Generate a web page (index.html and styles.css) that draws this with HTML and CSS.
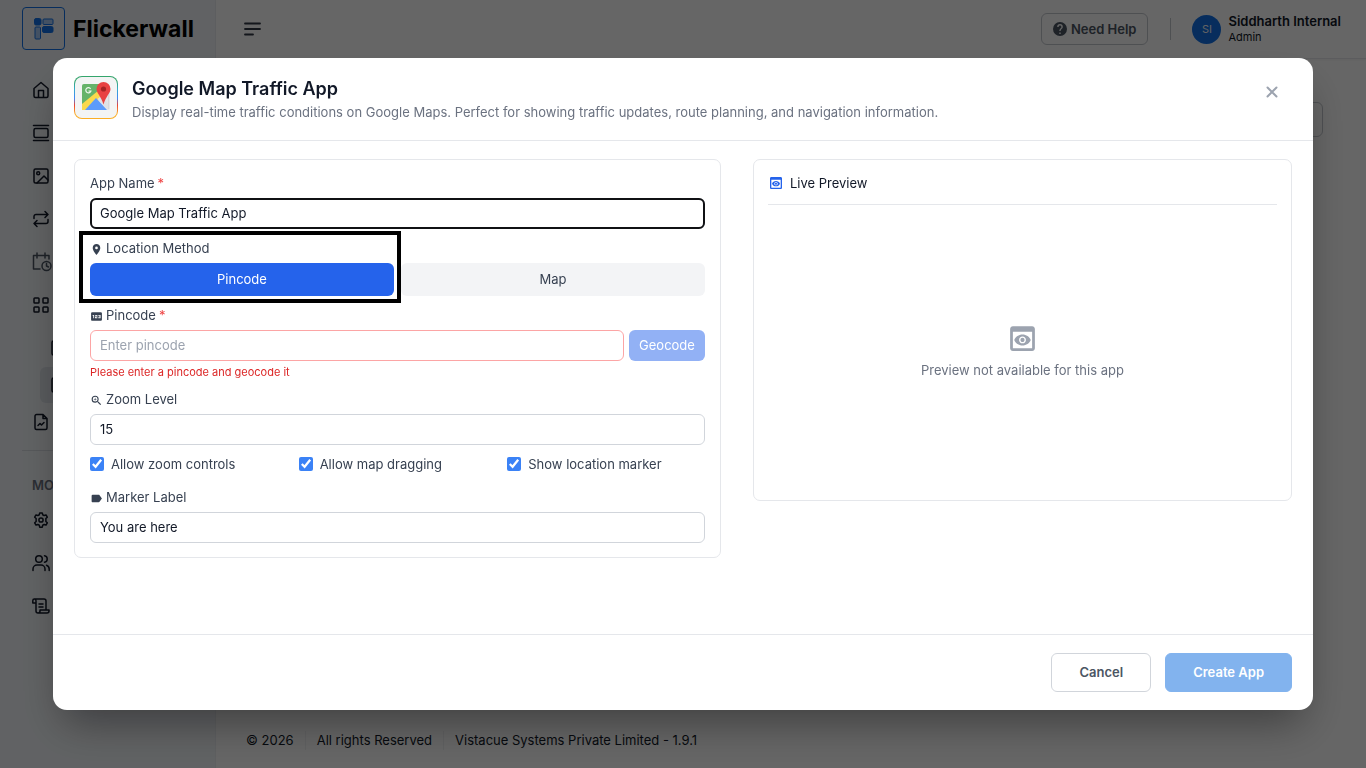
FILE: index.html
```html
<!DOCTYPE html>
<html lang="en">
<head>
<meta charset="utf-8">
<title>Flickerwall</title>
<meta name="viewport" content="width=device-width, initial-scale=1">
<link rel="stylesheet" href="styles.css">
</head>
<body>
<div class="app">
  <aside class="sidebar">
    <div class="brand">
      <span class="brand-mark">
        <svg width="20" height="22" viewBox="0 0 20 22" fill="none" stroke="#1272e8"><rect x=".5" y=".5" width="6.500" height="6.500" rx="1.500" fill="#1272e8"/><rect x="9" y="1" width="10" height="5.500" rx="1" fill="#a9cbf7"/><rect x="8.500" y="8.500" width="10.500" height="6" rx="1.500" fill="#1272e8"/><rect x="1" y="9" width="5.500" height="12" rx="1" fill="#a9cbf7"/></svg>
      </span>
      <span class="brand-name">Flickerwall</span>
    </div>
    <nav class="nav" aria-label="Main">
      <a class="nav-item" href="#" aria-label="Home"><svg class="line-icon" viewBox="0 0 18 18"><path d="M2 7.500 9 1.500l7 6V15a1.500 1.500 0 0 1-1.500 1.500h-11A1.500 1.500 0 0 1 2 15zM6.500 16V9.500h5V16"/></svg></a>
      <a class="nav-item" href="#" aria-label="Screens"><svg class="line-icon" viewBox="0 0 18 18"><path d="M1.500 1.500h15M1.500 16.500h15"/><rect x="2" y="4.500" width="14" height="9" rx="1.500"/></svg></a>
      <a class="nav-item" href="#" aria-label="Media"><svg class="line-icon" viewBox="0 0 18 18"><rect x="2" y="2" width="14" height="14" rx="1.500"/><circle cx="6.200" cy="6.200" r="1.500"/><path d="m5 16 7-7 4 4"/></svg></a>
      <a class="nav-item" href="#" aria-label="Playlists"><svg class="line-icon" viewBox="0 0 18 18"><path d="m13 1.500 3 3-3 3M2 8.500V6.500a2 2 0 0 1 2-2h12M5 16.500l-3-3 3-3M16 9.500v2a2 2 0 0 1-2 2H2"/></svg></a>
      <a class="nav-item nav-muted" href="#" aria-label="Schedules"><svg class="line-icon line-icon-lg" viewBox="0 0 20 20"><path d="M17 7V3.500H1.500V17H8M5 1v5M13 1v5"/><circle cx="14.500" cy="14" r="4.500"/><path d="M14.500 11.500V14l2 1"/></svg></a>
      <a class="nav-item" href="#" aria-label="Apps"><svg class="line-icon" viewBox="0 0 18 18"><rect x="2" y="2" width="5" height="5" rx=".8"/><rect x="11" y="2" width="5" height="5" rx=".8"/><rect x="2" y="11" width="5" height="5" rx=".8"/><rect x="11" y="11" width="5" height="5" rx=".8"/></svg></a>
      <div class="subnav">
        <a class="nav-item" href="#" aria-label="App store"><svg class="line-icon" viewBox="0 0 18 18"><rect x="2" y="2" width="14" height="14" rx="1.500"/></svg></a>
        <a class="nav-item nav-active" href="#" aria-label="My apps"><svg class="line-icon" viewBox="0 0 18 18"><rect x="2" y="2" width="14" height="14" rx="1.500"/></svg></a>
        <a class="nav-item nav-flush" href="#" aria-label="Reports"><svg class="line-icon" viewBox="0 0 18 18"><path d="M11 1.500H4.500A1.500 1.500 0 0 0 3 3v12a1.500 1.500 0 0 0 1.500 1.500h9A1.500 1.500 0 0 0 15 15V5.500zM11 1.500v4h4M6 12.500l2-2 1.500 1.500 2.500-2.500"/></svg></a>
      </div>
      <h2 class="nav-heading">MORE</h2>
      <a class="nav-item" href="#" aria-label="Settings"><svg class="line-icon" viewBox="0 0 24 24"><path class="gear" d="M10.300 2.500h3.400l.6 2.500 1.900 1.100 2.500-.8 1.700 3-1.900 1.800v3.800l1.900 1.800-1.700 3-2.500-.8-1.900 1.100-.6 2.500h-3.400l-.6-2.500-1.900-1.100-2.500.8-1.700-3 1.900-1.800v-3.800L3.600 8.300l1.700-3 2.500.8L9.700 5z"/><circle class="gear" cx="12" cy="12" r="2.800"/></svg></a>
      <a class="nav-item" href="#" aria-label="Users"><svg class="line-icon" viewBox="0 0 18 18"><circle cx="7" cy="5" r="3.300"/><path d="M1 16.500v-1.500a4 4 0 0 1 4-4h4a4 4 0 0 1 4 4v1.500M12.500 1.700a3.300 3.300 0 0 1 0 6.500M14.500 11.200a4 4 0 0 1 2.700 3.800v1.500"/></svg></a>
      <a class="nav-item" href="#" aria-label="Logs"><svg class="line-icon" viewBox="0 0 18 18"><path d="M14 12V4a2 2 0 0 0-2-2H3M7 7h4M7 10h4M6 16h9a2 2 0 0 0 2-2v-1H8v1a2 2 0 0 1-4 0V3.700a1.600 1.600 0 0 0-3.200 0V6H4"/></svg></a>
    </nav>
  </aside>
  <div class="main">
    <header class="topbar">
      <button class="menu-button" type="button" aria-label="Toggle menu"><svg width="18" height="14" viewBox="0 0 18 14" stroke="#303744" stroke-width="1.800" stroke-linecap="round"><path d="M1 1.500h15M1 7h15M1 12.500h8"/></svg></button>
      <button class="help-button" type="button"><svg width="14" height="14" viewBox="2 2 20 20" fill="#4b5563"><path d="M12 2a10 10 0 1 0 0 20 10 10 0 0 0 0-20zm1 17h-2v-2h2zm2.070-7.750-.9.920C13.450 12.900 13 13.500 13 15h-2v-.5c0-1.100.45-2.100 1.170-2.830l1.240-1.260c.37-.36.59-.86.59-1.410a2 2 0 0 0-4 0H8a4 4 0 0 1 8 0c0 .88-.36 1.680-.93 2.250z"/></svg>Need Help</button>
      <span class="topbar-rule"></span>
      <div class="user">
        <span class="avatar">SI</span>
        <div class="user-text"><strong>Siddharth Internal</strong><span>Admin</span></div>
      </div>
    </header>
    <main class="page"><button class="page-button" type="button" aria-label="Page actions"></button></main>
    <footer class="page-footer"><span>© 2026</span><span>All rights Reserved</span><span>Vistacue Systems Private Limited - 1.9.1</span></footer>
  </div>
</div>

<div class="overlay">
  <section class="modal" role="dialog" aria-modal="true" aria-labelledby="dialog-title">
    <header class="modal-header">
      <span class="app-icon">
        <svg width="30" height="30" viewBox="0 0 30 30"><path d="M26 6h2.500v21.500H22z" fill="#d5d8da"/><rect x="1" y="2" width="26" height="26" rx="2" fill="#e4e6e8"/><path d="M3 2h17l1 8L1 27V4a2 2 0 0 1 2-2z" fill="#66b36a"/><path d="M1 22 18 8l5 6L5 28H1z" fill="#fbd94d"/><path d="m15 16 11 12H4z" fill="#5c9bfb"/><path d="m16.500 17 5-4 5.500 9v6z" fill="#dfe2e5"/><path d="M9.600 6.800A2.600 2.600 0 1 0 9.900 9H7.500" fill="none" stroke="#eef7ee" stroke-width="1.200"/><path d="M22.500 0a7 7 0 0 0-7 7c0 4 4.500 7 7 15.500C25 14 29.500 11 29.500 7a7 7 0 0 0-7-7z" fill="#e84242"/><circle cx="22.500" cy="7" r="2.600" fill="#a52525"/></svg>
      </span>
      <div class="modal-heading">
        <h1 id="dialog-title">Google Map Traffic App</h1>
        <p>Display real-time traffic conditions on Google Maps. Perfect for showing traffic updates, route planning, and navigation information.</p>
      </div>
      <button class="close-button" type="button" aria-label="Close"><svg width="12" height="12" viewBox="0 0 12 12" stroke="#9ca3af" stroke-width="2" stroke-linecap="round"><path d="m1.500 1.500 9 9M10.500 1.500l-9 9"/></svg></button>
    </header>
    <div class="modal-body">
      <form class="card settings" id="app-form">
        <div class="field">
          <label for="app-name">App Name <span class="required">*</span></label>
          <input class="text-input name-input" id="app-name" type="text" value="Google Map Traffic App" autofocus>
        </div>
        <div class="field highlighted" role="group" aria-labelledby="method-label">
          <span class="label" id="method-label"><svg class="label-icon" viewBox="0 0 24 24"><path d="M12 2C8.130 2 5 5.130 5 9c0 5.250 7 13 7 13s7-7.750 7-13c0-3.870-3.130-7-7-7zm0 9.500a2.500 2.500 0 0 1 0-5 2.500 2.500 0 0 1 0 5z"/></svg>Location Method</span>
          <div class="segments">
            <button class="segment segment-on" type="button" aria-pressed="true">Pincode</button>
            <button class="segment" type="button" aria-pressed="false">Map</button>
          </div>
        </div>
        <div class="field">
          <label for="pincode"><svg class="label-icon" viewBox="0 0 24 24"><path fill-rule="evenodd" d="M20 4H4a2 2 0 0 0-2 2v12c0 1.100.9 2 2 2h16a2 2 0 0 0 2-2V6a2 2 0 0 0-2-2zM7.600 15H6v-4.500H4.800V9h2.800zm6-2.500h-2.700v1h2.700V15H9.300v-3h2.800v-1.500H9.300V9h4.300zM19.500 15h-4.200v-1.400H18v-1h-1.800v-1.200H18v-1h-2.700V9h4.200z"/></svg>Pincode <span class="required">*</span></label>
          <div class="input-row">
            <input class="text-input input-error" id="pincode" type="text" placeholder="Enter pincode" aria-describedby="pincode-error">
            <button class="geocode-button" type="button">Geocode</button>
          </div>
          <p class="error" id="pincode-error">Please enter a pincode and geocode it</p>
        </div>
        <div class="field">
          <label for="zoom"><svg class="label-icon" viewBox="0 0 24 24"><path d="M15.500 14h-.79l-.28-.27A6.470 6.470 0 0 0 16 9.500 6.500 6.500 0 1 0 9.500 16c1.610 0 3.090-.59 4.230-1.570l.27.28v.79l5 4.990L20.490 19zm-6 0a4.500 4.500 0 1 1 0-9 4.500 4.500 0 0 1 0 9zm2.500-4h-2v2H9v-2H7V9h2V7h1v2h2z"/></svg>Zoom Level</label>
          <input class="text-input" id="zoom" type="text" inputmode="numeric" value="15">
        </div>
        <div class="checks">
          <label class="check"><input type="checkbox" checked>Allow zoom controls</label>
          <label class="check"><input type="checkbox" checked>Allow map dragging</label>
          <label class="check"><input type="checkbox" checked>Show location marker</label>
        </div>
        <div class="field">
          <label for="marker"><svg class="label-icon" viewBox="0 0 24 24"><path d="M17.630 5.840C17.270 5.330 16.670 5 16 5H5a2 2 0 0 0-2 2v10c0 1.100.9 2 2 2h11c.67 0 1.270-.33 1.630-.84L22 12z"/></svg>Marker Label</label>
          <input class="text-input" id="marker" type="text" value="You are here">
        </div>
      </form>
      <section class="card preview">
        <h2 class="preview-title"><svg width="16" height="16" viewBox="0 0 24 24" fill="#2563eb"><path id="preview-shape" d="M19 3H5c-1.110 0-2 .9-2 2v14c0 1.100.89 2 2 2h14c1.100 0 2-.9 2-2V5c0-1.100-.89-2-2-2zm0 16H5V7h14v12zm-5.500-6c0 .83-.67 1.500-1.500 1.500s-1.500-.67-1.500-1.500.67-1.500 1.500-1.500 1.500.67 1.500 1.500zM12 9c-2.730 0-5.060 1.660-6 4 .94 2.340 3.270 4 6 4s5.060-1.660 6-4c-.94-2.340-3.270-4-6-4zm0 6.500c-1.380 0-2.500-1.120-2.500-2.500s1.120-2.500 2.500-2.500 2.500 1.120 2.500 2.500-1.120 2.500-2.500 2.500z"/></svg>Live Preview</h2>
        <div class="preview-empty">
          <svg width="33" height="33" viewBox="0 0 24 24" fill="#9ca3af"><use href="#preview-shape"/></svg>
          <p>Preview not available for this app</p>
        </div>
      </section>
    </div>
    <footer class="modal-footer">
      <button class="button button-outline" type="button">Cancel</button>
      <button class="button button-primary" type="submit" form="app-form">Create App</button>
    </footer>
  </section>
</div>
<script src="app.js"></script>
</body>
</html>
```
FILE: styles.css
```css
* { box-sizing: border-box; }
body {
  margin: 0;
  font: 13px/19px Inter, "Liberation Sans", sans-serif;
  color: #111827;
  background: #fff;
}
button, input { font: inherit; color: inherit; }
button { cursor: pointer; }
h1, h2, p { margin: 0; }
svg { flex: none; display: block; }

.app { display: flex; min-height: 100vh; }
.sidebar {
  flex: 0 0 216px;
  padding: 7px 20px 0 22px;
  background: #f3f6fa;
  border-right: 1px solid #eceff3;
}
.brand { display: flex; align-items: center; gap: 8px; }
.brand-mark {
  display: grid;
  place-items: center;
  width: 43px;
  height: 43px;
  border: 1px solid #1272e8;
  border-radius: 4px;
}
.brand-name { font-size: 23px; line-height: 32px; font-weight: 700; color: #000; }
.nav { display: flex; flex-direction: column; gap: 7px; padding-top: 22px; }
.nav-item { display: flex; align-items: center; height: 36px; padding-left: 10px; color: #111827; border-radius: 6px; }
.nav-muted { color: #4b5563; }
.line-icon {
  width: 18px;
  height: 18px;
  fill: none;
  stroke: currentColor;
  stroke-width: 1.500;
  stroke-linecap: round;
  stroke-linejoin: round;
}
.line-icon-lg { width: 20px; height: 20px; }
.gear { stroke-width: 2; }
.subnav { display: flex; flex-direction: column; gap: 1px; padding-bottom: 10px; border-bottom: 1px solid #d9dde3; }
.subnav .nav-item { margin-left: 18px; }
.subnav .nav-flush { margin-left: 0; }
.nav-active { background: #dfe4ea; }
.nav-heading { padding: 18px 0 0 10px; font-size: 13px; font-weight: 600; color: #6b7280; }

.main { flex: 1; display: flex; flex-direction: column; min-width: 0; }
.topbar {
  display: flex;
  align-items: center;
  height: 59px;
  padding: 0 25px 0 28px;
  border-bottom: 1px solid #e5e7eb;
  box-shadow: 0 1px 2px rgba(0, 0, 0, .05);
}
.menu-button { margin-right: auto; padding: 0; border: 0; background: none; }
.help-button {
  display: flex;
  align-items: center;
  gap: 4px;
  height: 32px;
  padding: 0 11px;
  border: 1px solid #c4c8ce;
  border-radius: 6px;
  background: none;
  font-weight: 600;
  color: #4b5563;
}
.topbar-rule { width: 1px; height: 22px; margin: 0 21px 0 22px; background: #c4c8ce; }
.user { display: flex; align-items: center; gap: 7px; }
.avatar {
  display: grid;
  place-items: center;
  width: 29px;
  height: 29px;
  border-radius: 50%;
  background: #1272e8;
  color: #f3f6fa;
  font-size: 11px;
}
.user-text { display: flex; flex-direction: column; font-size: 11px; line-height: 16px; }
.user-text strong { font-size: 13px; font-weight: 600; }
.page { flex: 1; display: flex; justify-content: flex-end; align-items: flex-start; padding: 43px; }
.page-button { width: 108px; height: 35px; border: 1px solid #c4c8ce; border-radius: 6px; background: none; }
.page-footer { display: flex; padding: 18px 30px; }
.page-footer span + span { margin-left: 11px; padding-left: 11px; border-left: 1px solid #f0f1f3; }

.overlay {
  position: fixed;
  inset: 0;
  display: flex;
  align-items: center;
  justify-content: center;
  padding: 0 53px;
  background: rgba(0, 0, 0, .6);
}
.modal {
  display: flex;
  flex-direction: column;
  width: 100%;
  max-width: 1260px;
  height: 85vh;
  border-radius: 14px;
  background: #fff;
  box-shadow: 0 22px 44px -10px rgba(0, 0, 0, .4);
}
.modal-header {
  display: flex;
  gap: 14px;
  padding: 18px 21px;
  border-bottom: 1px solid #e5e7eb;
}
.app-icon {
  display: grid;
  place-items: center;
  width: 44px;
  height: 43px;
  border: 1px solid transparent;
  border-radius: 8px;
  background: linear-gradient(#f3f4f4, #f3f4f4) padding-box,
    linear-gradient(#34a56c 12%, #35a8d0 32%, #4285f4 52%, #ea4335 68%, #fbae25 88%) border-box;
}
.modal-heading { flex: 1; }
.modal-heading h1 { font-size: 18px; line-height: 26px; font-weight: 600; }
.modal-heading p { line-height: 20px; color: #6b7280; }
.close-button {
  display: grid;
  place-items: center;
  width: 40px;
  height: 32px;
  padding: 0;
  border: 0;
  background: none;
}

.modal-body {
  flex: 1;
  display: grid;
  grid-template-columns: 6fr 5fr;
  gap: 32px;
  align-items: start;
  min-height: 0;
  padding: 18px 21px;
  overflow: auto;
}
.card { padding: 14px 15px; border: 1px solid #e5e7eb; border-radius: 7px; }
.field { position: relative; margin-bottom: 10px; color: #374151; }
.field:last-child { margin-bottom: 0; }
.field > label, .label { display: flex; align-items: center; gap: 3px; margin-bottom: 5px; }
.label-icon { width: 13px; height: 13px; margin-top: 2px; fill: #374151; }
.required { color: #ef4444; }
.text-input {
  display: block;
  width: 100%;
  height: 31px;
  padding: 0 9px;
  border: 1px solid #d1d5db;
  border-radius: 6px;
  background: #fff;
  color: #111827;
}
.text-input::placeholder { color: #9ca3af; }
.text-input:focus { outline: 2px solid #101114; outline-offset: -2px; }
.input-error { border-color: #fca5a5; }
.highlighted::after {
  content: "";
  position: absolute;
  inset: -8px calc(50% - 4px) -7px -11px;
  border: 4px solid #000;
  pointer-events: none;
}
.segments { display: grid; grid-template-columns: 1fr 1fr; gap: 7px; }
.segment { height: 33px; border: 0; border-radius: 6px; background: #f3f4f6; color: #374151; }
.segment-on { background: #2563eb; color: #fff; }
.input-row { display: flex; gap: 5px; }
.input-row .text-input { flex: 1; }
.geocode-button { padding: 0 10px; border: 0; border-radius: 6px; background: #92b1f5; color: #fff; }
.error { margin-top: 3px; font-size: 11px; line-height: 16px; color: #dc2626; }
.checks { display: grid; grid-template-columns: repeat(3, 1fr); gap: 11px; margin-bottom: 14px; color: #374151; }
.check { display: flex; align-items: center; gap: 7px; }
.check input { width: 14px; height: 14px; margin: 0; accent-color: #3b82f6; }

.preview { padding: 14px; }
.preview-title {
  display: flex;
  align-items: center;
  gap: 6px;
  padding-bottom: 11px;
  border-bottom: 1px solid #e5e7eb;
  font-size: 13px;
  font-weight: 400;
}
.preview-empty {
  display: flex;
  flex-direction: column;
  align-items: center;
  justify-content: center;
  gap: 6px;
  height: 267px;
  margin-top: 14px;
  padding-bottom: 3px;
  color: #6b7280;
}
.modal-footer {
  display: flex;
  justify-content: flex-end;
  gap: 14px;
  padding: 18px 21px;
  border-top: 1px solid #e5e7eb;
}
.button { height: 39px; padding: 0 27px; border: 1px solid #d1d5db; border-radius: 6px; background: #fff; font-weight: 600; color: #4b5563; }
.button-primary { border-color: #82b3ee; background: #82b3ee; color: #fff; }
```
FILE: app.js
```js
const nameInput = document.getElementById("app-name");
nameInput.focus();
nameInput.setSelectionRange(nameInput.value.length, nameInput.value.length);
```
